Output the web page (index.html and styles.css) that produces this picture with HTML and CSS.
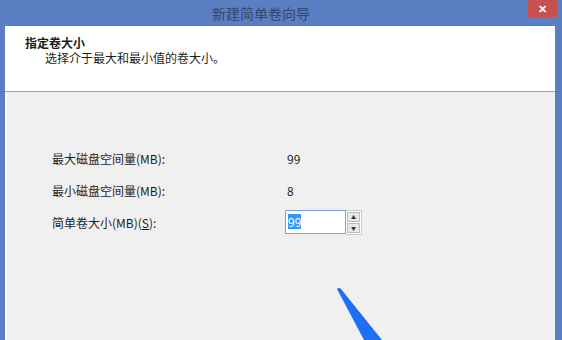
FILE: index.html
```html
<!DOCTYPE html>
<html lang="zh-CN">
<head>
    <meta charset="UTF-8">
    <title>新建简单卷向导</title>
    <link rel="stylesheet" href="styles.css">
</head>
<body>

    <div class="window">
        <div class="titlebar">
            <span class="title">新建简单卷向导</span>
            <span class="close-btn">✕</span>
        </div>

        <div class="client">
            <div class="header">
                <div class="header-title">指定卷大小</div>
                <div class="header-sub">选择介于最大和最小值的卷大小。</div>
            </div>

            <div class="content">
                <div class="row">
                    <span class="label">最大磁盘空间量(MB):</span>
                    <span class="value">99</span>
                </div>
                <div class="row">
                    <span class="label">最小磁盘空间量(MB):</span>
                    <span class="value">8</span>
                </div>
                <div class="row">
                    <span class="label">简单卷大小(MB)(<u>S</u>):</span>
                    <div class="spinbox">
                        <div class="spin-input"><span class="selected">99</span></div>
                        <div class="spin-buttons">
                            <div class="spin-btn">&#9650;</div>
                            <div class="spin-btn">&#9660;</div>
                        </div>
                    </div>
                </div>
            </div>
        </div>
    </div>

    <svg class="arrow" width="80" height="60" viewBox="0 0 80 60">
        <path d="M17 9 Q19 7 21 9 L62 60 L44 60 Z" fill="#1f6ff2"/>
    </svg>

</body>
</html>
```

FILE: styles.css
```css
body {
    margin: 0;
    padding: 0;
    background-color: #5a7ec2;
    font-family: "Noto Sans CJK SC", "Liberation Sans", sans-serif;
    font-size: 12px;
    color: #1e1e1e;
    width: 562px;
    height: 340px;
    overflow: hidden;
    position: relative;
}

.window {
    display: flex;
    flex-direction: column;
    height: 340px;
}

.titlebar {
    height: 26px;
    position: relative;
    display: flex;
    justify-content: center;
    align-items: center;
}

.title {
    font-size: 14px;
    color: #34466b;
    margin-right: 40px;
    margin-top: -1px;
}

.close-btn {
    position: absolute;
    top: 0;
    right: 5px;
    width: 29px;
    height: 17px;
    background-color: #c75050;
    color: #ffffff;
    font-size: 11px;
    font-weight: bold;
    line-height: 17px;
    text-align: center;
}

.client {
    flex: 1;
    margin: 0 7px 0 5px;
    background-color: #f0f0f0;
    border-left: 2px solid #fafafa;
    display: flex;
    flex-direction: column;
}

.header {
    background-color: #ffffff;
    height: 66px;
    border-bottom: 1px solid #a0a0a0;
    box-sizing: border-box;
    padding: 11px 0 0 20px;
    margin-left: -2px;
}

.header-title {
    font-weight: bold;
    font-size: 12px;
    line-height: 12px;
}

.header-sub {
    line-height: 12px;
    padding-left: 20px;
    margin-top: 3px;
}

.content {
    padding: 50px 0 0 45px;
}

.row {
    display: flex;
    align-items: center;
    height: 32px;
}

.label {
    width: 235px;
    color: #1e1e1e;
}

.spinbox {
    display: flex;
    margin-left: -2px;
}

.spin-input {
    width: 61px;
    height: 24px;
    background-color: #ffffff;
    border: 1px solid #7aa0d6;
    display: flex;
    align-items: center;
    padding-left: 2px;
    box-sizing: border-box;
}

.selected {
    background-color: #3399ff;
    color: #ffffff;
    line-height: 15px;
}

.spin-buttons {
    display: flex;
    flex-direction: column;
    border: 1px solid #c8c8c8;
    border-left: none;
    background-color: #ffffff;
    padding: 1px;
    gap: 1px;
}

.spin-btn {
    width: 13px;
    height: 10px;
    background-color: #e8e8e8;
    border: 1px solid #bcbcbc;
    box-sizing: border-box;
    font-size: 5px;
    line-height: 8px;
    text-align: center;
    color: #303030;
}

.arrow {
    position: absolute;
    left: 320px;
    top: 280px;
}
```
